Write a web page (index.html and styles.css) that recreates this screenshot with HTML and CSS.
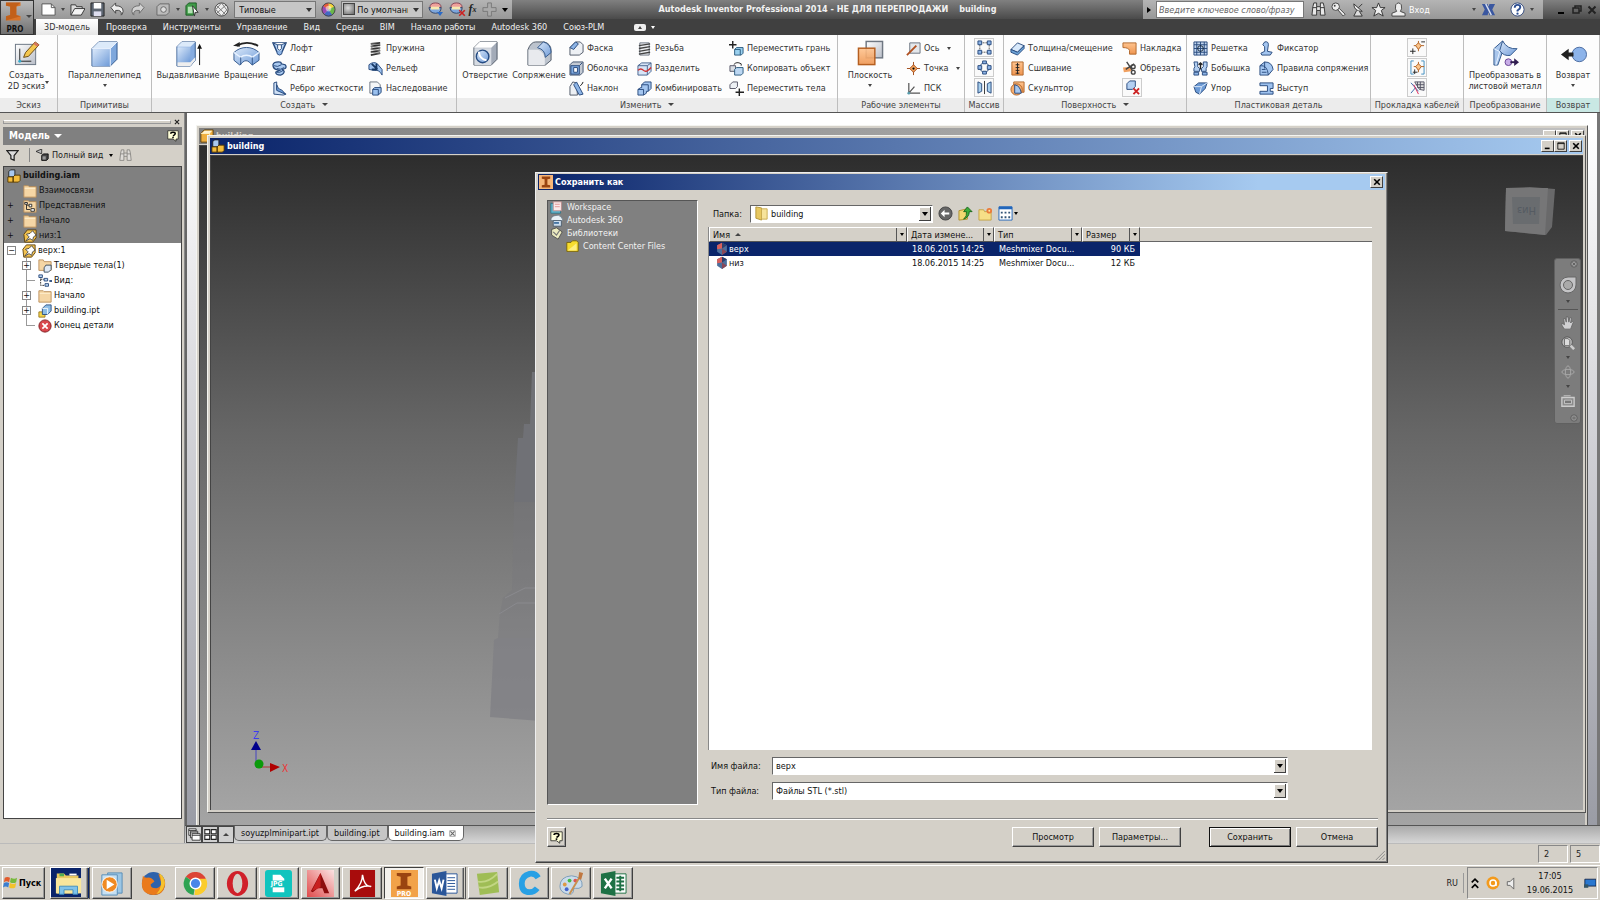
FILE: index.html
```html
<!DOCTYPE html>
<html lang="ru">
<head>
<meta charset="utf-8">
<title>Autodesk Inventor Professional 2014</title>
<link rel="stylesheet" href="styles.css">
</head>
<body>
<svg class="defs" aria-hidden="true">
<defs>
<linearGradient id="blue" x1="0" y1="0" x2="1" y2="1"><stop offset="0" stop-color="#dbe9fa"/><stop offset="1" stop-color="#6f9bd8"/></linearGradient>
<linearGradient id="grey" x1="0" y1="0" x2="1" y2="1"><stop offset="0" stop-color="#ffffff"/><stop offset="1" stop-color="#b9bec8"/></linearGradient>
<linearGradient id="org" x1="0" y1="0" x2="0" y2="1"><stop offset="0" stop-color="#ffc48f"/><stop offset="1" stop-color="#ee9550"/></linearGradient>
<symbol id="sketch" viewBox="0 0 28 28"><rect x="2.500" y="4.500" width="21" height="21" fill="url(#grey)" stroke="#6b7684"/><path d="M7 9v13h12" fill="none" stroke="#222"/><circle cx="7" cy="22" r="1.500" fill="#3ac"/><path d="M11 18l2-5L23 2l4 3-11 12z" fill="#f3c64f" stroke="#6a4a13"/><path d="M23 2l4 3-2 2-4-3z" fill="#d5755d"/></symbol>
<symbol id="box" viewBox="0 0 28 28"><path d="M1 9l7-7h19v18l-7 7H1z" fill="#7ea7dc" stroke="#33588c"/><path d="M1 9l7-7h19l-7 7z" fill="#dceafa"/><path d="M1.500 9.500h18V27h-18z" fill="url(#blue)"/><path d="M1 9h19l7-7M20 9v18" fill="none" stroke="#eef5ff"/></symbol>
<symbol id="extrude" viewBox="0 0 28 28"><path d="M2 7l5-5h14v19l-5 6H2z" fill="#86ace0" stroke="#33588c"/><path d="M2.500 7.500H16V23H2.500z" fill="url(#blue)"/><path d="M2 7l5-5h14l-5 5z" fill="#dceafa"/><path d="M2.500 23H16l5-5v3l-5 6H2.500z" fill="#eee"/><path d="M25.500 26V7" stroke="#111"/><path d="M23 9l2.500-5L28 9z" fill="#111"/></symbol>
<symbol id="revolve" viewBox="0 0 28 28"><path d="M1 13C8 6 20 6 27 13v8l-7 5-3-3c-2-2-5-2-7 0l-3 3-6-5z" fill="url(#blue)" stroke="#33588c"/><path d="M1 13l7 5c3-3 9-3 12 0l7-5" fill="none" stroke="#e8f2ff" stroke-width="1.500"/><path d="M8 18v8m12-8v8" stroke="#33588c"/><path d="M4 6Q14 0 26 6" fill="none" stroke="#222" stroke-width="2"/><path d="M0 6l7-4v5z" fill="#222"/></symbol>
<symbol id="hole" viewBox="0 0 28 28"><path d="M2 8l6-6h18v18l-6 6H2z" fill="#a3abb8" stroke="#4f5866"/><path d="M2 8l6-6h18l-6 6z" fill="#fff"/><path d="M2.500 8.500H20V26H2.500z" fill="#d6dbe2"/><circle cx="11" cy="17" r="6.500" fill="url(#blue)" stroke="#254b82" stroke-width="1.500"/><path d="M7 12q1 8 8 9" fill="none" stroke="#fff" stroke-width="2"/></symbol>
<symbol id="fillet" viewBox="0 0 28 28"><path d="M2 10Q5 2 10 2h9q7 2 7 9v10l-6 5H2z" fill="#bcc3cd" stroke="#4f5866"/><path d="M2.500 10h10q6 2 7 9v7h-17z" fill="#e8eaee"/><path d="M12 8L18 2q8 2 8 11l-6 5q0-8-8-10z" fill="url(#blue)" stroke="#33588c"/></symbol>
<symbol id="plane" viewBox="0 0 28 28"><rect x="9.500" y="1.500" width="17" height="17" fill="url(#grey)" stroke="#6f7782" stroke-width="1.500"/><rect x="1.500" y="8.500" width="17" height="17" fill="url(#org)" fill-opacity=".9" stroke="#b55f20" stroke-width="1.500"/></symbol>
<symbol id="sheet" viewBox="0 0 28 28"><path d="M2 9L11 1l2 5-7 20H2z" fill="#a9c6ec" stroke="#33588c"/><path d="M11 1q5 9 15 8l-7 7q-7 1-11-5z" fill="url(#blue)" stroke="#33588c"/><path d="M2 9l6 3-4 14" fill="none" stroke="#e8f2ff"/><circle cx="17" cy="23" r="3.500" fill="#c9aee8" stroke="#694594"/><path d="M19 23h5" stroke="#311d50" stroke-width="2"/><path d="M23 19l5 4-5 4z" fill="#311d50"/></symbol>
<symbol id="back" viewBox="0 0 28 28"><circle cx="20" cy="15" r="7.500" fill="#8db4ea" stroke="#4b6ba0"/><path d="M1 15l8-6v4h5v4H9v4z" fill="#222"/></symbol>
<symbol id="loft" viewBox="0 0 16 16"><path d="M1 2h14l-4 9q-3 3-6 0z" fill="#b4d0f2" stroke="#274a7d" stroke-width="1.500"/><path d="M1 2l5 2h4l5-2M6 4v4l2 2 2-2V4" fill="#fff" stroke="#274a7d"/><path d="M5 11q0 4 3 4t3-4" fill="#8db4e6" stroke="#274a7d"/></symbol>
<symbol id="sweep" viewBox="0 0 16 16"><path d="M1 4q1-3 6-3 3 0 3 2l4 1q2 2 0 4l-3 1 2 2q0 3-4 4-5 0-5-3l4-2-4-1q-3-1-3-5z" fill="#a9c9f0" stroke="#274a7d" stroke-width="1.300"/><path d="M2 5q4 2 8-1M5 8q4 2 8-1M5 12q3 1 7-2" fill="none" stroke="#274a7d"/></symbol>
<symbol id="rib" viewBox="0 0 16 16"><path d="M2 2l3-1v8l7 3 3 2-3 1-10-1z" fill="#cfe0f5" stroke="#274a7d"/><path d="M5 4q1 5 6 6l3 4-9-4z" fill="#6d9bd6" stroke="#274a7d"/></symbol>
<symbol id="spring" viewBox="0 0 16 16"><path d="M3 3l10-1M3 6l10-2M3 9l10-2M3 12l10-2M3 15l10-2" stroke="#333" stroke-width="2"/><path d="M3 3l10 1M3 6l10 1M3 9l10 1M3 12l10 1" stroke="#888"/></symbol>
<symbol id="emboss" viewBox="0 0 16 16"><path d="M1 4q5-4 9-1l5 6v6q-3-6-8-5L1 9z" fill="#9dc1ee" stroke="#274a7d"/><path d="M4 3l6 6M9 3v6H4" stroke="#173966" stroke-width="2" fill="none"/></symbol>
<symbol id="derive" viewBox="0 0 16 16"><path d="M2 1h8l3 3v9H2z" fill="#f4f6f8" stroke="#69727f"/><path d="M5 9l2-2h7v5l-3 3H5z" fill="#9ac0ee" stroke="#274a7d"/><path d="M5 9h6v6" fill="none" stroke="#274a7d"/></symbol>
<symbol id="cham" viewBox="0 0 16 16"><path d="M1 7l6-6h5l3 3v8l-4 3H1z" fill="#edf0f4" stroke="#4f5866"/><path d="M1 7l6-6 3 2-5 6z" fill="#8db4e6" stroke="#274a7d"/></symbol>
<symbol id="shell" viewBox="0 0 16 16"><path d="M1 4l3-3h11v11l-3 3H1z" fill="#c4cad3" stroke="#3f526e"/><path d="M2 5h9v9H2z" fill="#7fa9df" stroke="#274a7d"/><path d="M5 7h4v5H5z" fill="#fff" stroke="#274a7d"/><path d="M11 5l3-3" stroke="#274a7d"/></symbol>
<symbol id="draft" viewBox="0 0 16 16"><path d="M1 6l3-5 4 1 1 13H1z" fill="#edf0f4" stroke="#4f5866"/><path d="M5 4l3-3 7 13-4 1z" fill="#8db4e6" stroke="#274a7d"/><path d="M12 5q2-1 3-4" stroke="#111" fill="none"/></symbol>
<symbol id="thread" viewBox="0 0 16 16"><path d="M3 2h10v13H3z" fill="#eef0f3" stroke="#6a7280"/><path d="M2 5l12-2M2 8l12-2M2 11l12-2M2 14l12-2" stroke="#444" stroke-width="1.400"/></symbol>
<symbol id="split" viewBox="0 0 16 16"><path d="M1 5l4-3h10v9l-4 4H1z" fill="#d7e4f6" stroke="#46648f"/><path d="M1 5h10l4-3M11 5v10" stroke="#46648f" fill="none"/><path d="M1 10q3-3 6 0t8-3" stroke="#d03030" stroke-width="1.500" fill="none"/></symbol>
<symbol id="comb" viewBox="0 0 16 16"><path d="M5 4l3-3h7v7l-3 3h-2v2l-3 2H1V9l3-2h1z" fill="#a4c6f0" stroke="#274a7d"/><path d="M5 4h7v7M1 9h6v6" fill="none" stroke="#274a7d"/></symbol>
<symbol id="moveface" viewBox="0 0 16 16"><path d="M4 0v8M0 4h8" stroke="#222" stroke-width="1.500"/><path d="M6 9l2-2h7v6l-2 2H6z" fill="#9ad0ee" stroke="#2a5a7d"/><path d="M6 9h6v6" fill="none" stroke="#2a5a7d"/></symbol>
<symbol id="copyobj" viewBox="0 0 16 16"><path d="M1 5h6v6H1z" fill="#d9dde3" stroke="#556"/><path d="M6 9l2-2h7v6l-2 2H6z" fill="#bcd7f2" stroke="#2a5a7d"/><path d="M5 4q3-4 8-1v2" fill="none" stroke="#222"/></symbol>
<symbol id="movebody" viewBox="0 0 16 16"><path d="M1 4l3-3h5v5L7 8H1z" fill="#edf0f4" stroke="#556"/><path d="M11 8v8M7 12h9" stroke="#222" stroke-width="1.500"/></symbol>
<symbol id="axis" viewBox="0 0 16 16"><path d="M4 2h11v11H4z" fill="#e4e7eb" stroke="#69727f"/><path d="M1 15L11 5" stroke="#b05020" stroke-width="2"/></symbol>
<symbol id="point" viewBox="0 0 16 16"><path d="M8 1v14M1 8h14" stroke="#a04a18"/><path d="M8 4l4 4-4 4-4-4z" fill="#f6a55c" stroke="#a04a18"/><circle cx="8" cy="8" r="1.200"/></symbol>
<symbol id="ucs" viewBox="0 0 16 16"><path d="M3 2v11h12M3 13l6-7" stroke="#555" fill="none" stroke-width="1.300"/><circle cx="3" cy="13" r="1.500" fill="#59a"/></symbol>
<symbol id="rect4" viewBox="0 0 16 16"><path d="M3 3h10v10H3z" fill="none" stroke="#555" stroke-dasharray="2 1"/><path d="M1 1h4v4H1zM11 1h4v4h-4zM1 11h4v4H1zM11 11h4v4h-4z" fill="#8db4e6" stroke="#274a7d"/></symbol>
<symbol id="circ4" viewBox="0 0 16 16"><circle cx="8" cy="8" r="5" fill="none" stroke="#274a7d"/><path d="M6 1h4v3H6zM6 12h4v3H6zM1 6h4v4H1zM11 6h4v4h-4z" fill="#8db4e6" stroke="#274a7d"/></symbol>
<symbol id="mirror" viewBox="0 0 16 16"><path d="M8 1v14" stroke="#333"/><path d="M1 2l4 2v8l-4 2zM15 2l-4 2v8l4 2z" fill="#a9d0ee" stroke="#274a7d"/></symbol>
<symbol id="thick" viewBox="0 0 16 16"><path d="M1 9l7-7 7 3-7 7z" fill="#d8e9fb" stroke="#274a7d"/><path d="M1 9l7 3 7-7v3l-7 7-7-3z" fill="#6da4d8" stroke="#274a7d"/></symbol>
<symbol id="stitch" viewBox="0 0 16 16"><path d="M2 1h12v14H2z" fill="url(#org)" stroke="#b0662b"/><path d="M8 2v12M6 4h4M6 7h4M6 10h4M6 13h4" stroke="#222"/></symbol>
<symbol id="sculpt" viewBox="0 0 16 16"><path d="M4 1h11v11H4z" fill="url(#org)" stroke="#b0662b"/><circle cx="7" cy="9" r="6" fill="#f7ae70" stroke="#b0662b"/><path d="M5 4v9h7q-1-8-7-9z" fill="#a9c9f0" stroke="#274a7d"/></symbol>
<symbol id="patch" viewBox="0 0 16 16"><path d="M1 2h14v12H8v-4q-1-3-7-3z" fill="url(#org)" stroke="#b0662b"/></symbol>
<symbol id="trim" viewBox="0 0 16 16"><path d="M1 7l9-1v5L2 12z" fill="#f0a060"/><path d="M5 1l6 9M13 3L4 9" stroke="#444" stroke-width="1.500"/><circle cx="12" cy="12" r="2" fill="none" stroke="#444" stroke-width="1.500"/><circle cx="12" cy="6" r="2" fill="none" stroke="#444" stroke-width="1.500"/></symbol>
<symbol id="delface" viewBox="0 0 16 16"><path d="M2 4l3-3h6v6l-3 3H2z" fill="#b4d0f2" stroke="#274a7d"/><path d="M9 9l6 6m0-6l-6 6" stroke="#c22" stroke-width="2"/></symbol>
<symbol id="grill" viewBox="0 0 16 16"><path d="M1 1h14v14H1z" fill="#c0d4ee" stroke="#274a7d"/><path d="M4 1v14M8 1v14M12 1v14M1 4h14M1 8h14M1 12h14" stroke="#274a7d"/><circle cx="8" cy="8" r="3" fill="none" stroke="#123"/></symbol>
<symbol id="boss" viewBox="0 0 16 16"><path d="M1 1h4v5l2 2v3H1V8l1-2zM11 1h4v5l-1 2v3H9V8l2-2z" fill="#b4d0f2" stroke="#274a7d"/><path d="M8 9V2M6 4l2-2 2 2" stroke="#222" fill="none" stroke-width="1.500"/><path d="M1 12h5v3H1zM10 12h5v3h-5z" fill="#8db4e6" stroke="#274a7d"/></symbol>
<symbol id="rest" viewBox="0 0 16 16"><path d="M1 6l5-4h9l-2 6-6 6-4-2z" fill="#6d9bd6" stroke="#274a7d"/><path d="M1 6h8l6-4M9 6l-2 8" stroke="#dceafa" fill="none"/></symbol>
<symbol id="snap" viewBox="0 0 16 16"><path d="M6 1q4-1 4 3l-1 7 5 1-2 3H3l-1-2 4-2V6L4 4z" fill="#a4c6f0" stroke="#274a7d"/></symbol>
<symbol id="rule" viewBox="0 0 16 16"><path d="M1 5l5-4q8 0 9 8l-5 6H1z" fill="#a4c6f0" stroke="#274a7d"/><path d="M1 5q8-1 9 10M3 9h4M3 12h5M6 1v7" fill="none" stroke="#274a7d"/></symbol>
<symbol id="lip" viewBox="0 0 16 16"><path d="M1 2h14v6h-3v3h3v3H1v-3h8V5H1z" fill="#9dc1ee" stroke="#274a7d"/></symbol>
<symbol id="cable1" viewBox="0 0 16 16"><path d="M9 1v11M4 6h11" stroke="#b06020"/><path d="M9 3l3 3-3 4-3-4z" fill="#fbc48a" stroke="#b06020"/><path d="M3 9v6M0 12h6M12 2h4" stroke="#222"/></symbol>
<symbol id="cable2" viewBox="0 0 16 16"><path d="M4 1H1v14h3M12 1h3v14h-3" fill="none" stroke="#3b8cc0"/><path d="M9 2v11M4 7h11" stroke="#b06020"/><path d="M9 4l3 3-3 4-3-4z" fill="#fbc48a" stroke="#b06020"/><path d="M5 10v5M3 13h5" stroke="#222"/></symbol>
<symbol id="cable3" viewBox="0 0 16 16"><path d="M5 2h10v9l-5-1z" fill="#ddd" stroke="#556"/><path d="M8 2v6m3-6v8M6 5h9M8 8h7" stroke="#556"/><path d="M1 3l8 9M1 14l5-6" stroke="#36a"/><path d="M4 5l5 10" stroke="#d25"/></symbol>
<symbol id="new" viewBox="0 0 16 16"><path d="M1 2h10l4 4v8H1z" fill="#fff" stroke="#555"/><path d="M11 2v4h4" fill="none" stroke="#555"/></symbol>
<symbol id="open" viewBox="0 0 16 16"><path d="M1 14V3h5l1 2h6v2" fill="#ddd" stroke="#333"/><path d="M1 14l4-7h11l-4 7z" fill="#f4f4f4" stroke="#333"/></symbol>
<symbol id="save" viewBox="0 0 16 16"><path d="M1 1h14v14H1z" fill="#5d6672" stroke="#222"/><path d="M4 1h8v6H4z" fill="#fff"/><path d="M4 10h8v5H4z" fill="#dde"/></symbol>
<symbol id="undo" viewBox="0 0 16 16"><path d="M1 6l5-5v3q8 0 8 6-1 4-2 4 1-6-6-5v3z" fill="#eee" stroke="#444"/></symbol>
<symbol id="select" viewBox="0 0 16 16"><path d="M1 5l3-3h10v9l-3 3H1z" fill="#bbb" stroke="#666"/><circle cx="8" cy="8" r="3" fill="#ddd" stroke="#666"/></symbol>
<symbol id="green" viewBox="0 0 16 16"><path d="M1 4l3-3h8v9l-3 4H1z" fill="#3f9a48" stroke="#1d5c25"/><path d="M3 5h5v7H3z" fill="#b4e0b4"/><path d="M8 4l6 7-3 0-1 4z" fill="#fff" stroke="#333"/></symbol>
<symbol id="ball" viewBox="0 0 16 16"><circle cx="8" cy="8" r="7" fill="#eee" stroke="#444"/><path d="M3 4l9 9M8 1l6 8M2 8l6 7M13 3L3 12M8 1L2 8M14 8l-6 7" stroke="#777"/></symbol>
<symbol id="wheel" viewBox="0 0 16 16"><path d="M8 8V1a7 7 0 0 1 6 4z" fill="#f5d53a"/><path d="M8 8l6-3a7 7 0 0 1-2 9z" fill="#6ab74a"/><path d="M8 8l4 6a7 7 0 0 1-9-1z" fill="#4468c4"/><path d="M8 8l-5 5a7 7 0 0 1-1-9z" fill="#9a4ab4"/><path d="M8 8L2 4a7 7 0 0 1 6-3z" fill="#e65a3a"/><circle cx="8" cy="8" r="7" fill="none" stroke="#444"/><circle cx="8" cy="7" r="3" fill="#fff" opacity=".5"/></symbol>
<symbol id="bowl" viewBox="0 0 16 16"><path d="M2 6q0-5 6-5t6 5z" fill="#efa09a" stroke="#845"/><path d="M1 6h13q0 6-6 6T1 6z" fill="#7da6dc" stroke="#346"/><path d="M3 5h9v3H3z" fill="#f6e9b0"/></symbol>
<symbol id="plus" viewBox="0 0 16 16"><path d="M6 1h4v5h5v4h-5v5H6v-5H1V6h5z" fill="#aaa" stroke="#777"/></symbol>
<symbol id="binoc" viewBox="0 0 16 16"><path d="M2 5l1-4h3v4h4V1h3l1 4 1 9h-5V9H6v5H1z" fill="#e8e8e8" stroke="#333"/><path d="M6 5v4m4-4v4M2 6h4m4 0h4" stroke="#333"/></symbol>
<symbol id="key" viewBox="0 0 16 16"><circle cx="5" cy="5" r="4" fill="#eee" stroke="#444"/><path d="M7 8l6 7 2-2-6-6z" fill="#eee" stroke="#444"/><circle cx="4" cy="4" r="1" fill="#444"/></symbol>
<symbol id="dish" viewBox="0 0 16 16"><path d="M3 2q0 8 9 8z" fill="#eee" stroke="#333"/><path d="M8 6l4-4M6 9l-3 6h9l-3-5" fill="#ddd" stroke="#333"/></symbol>
<symbol id="star" viewBox="0 0 16 16"><path d="M8 1l2 5h5l-4 3 2 6-5-3-5 3 2-6-4-3h5z" fill="#eee" stroke="#333"/></symbol>
<symbol id="user" viewBox="0 0 16 16"><path d="M5 3q3-4 6 0 1 5-1 7l5 2v3H1v-3l5-2Q4 8 5 3z" fill="#eee" stroke="#444"/></symbol>
<symbol id="exch" viewBox="0 0 16 16"><path d="M1 2h6l1 3 1-3h6l-3 6 3 6H9l-1-3-1 3H1l3-6z" fill="#3a57a0"/><path d="M5 2l6 12" stroke="#d8e0f0" stroke-width="1.500"/></symbol>
<symbol id="help" viewBox="0 0 16 16"><circle cx="8" cy="8" r="7" fill="#fff" stroke="#334a7c"/><path d="M5 6q0-3 3-3t3 2.500Q11 7 8 9v1" fill="none" stroke="#2b4d91" stroke-width="2"/><circle cx="8" cy="12.500" r="1.200" fill="#2b4d91"/></symbol>
<symbol id="asm" viewBox="0 0 16 16"><path d="M2 3l2-2h5v6L7 9H2z" fill="#a9c9f0" stroke="#222"/><path d="M1 9h6v6H1zM7 9l2-2h6v6l-2 2H7z" fill="#f4bd3c" stroke="#4d3300"/></symbol>
<symbol id="cubey" viewBox="0 0 16 16"><path d="M1 5l4-4h10v10l-4 4H1z" fill="#f0b040" stroke="#5a3d09"/><path d="M2 5l3-3h9l-3 3z" fill="#fff3d0"/><path d="M1 5h10v10" fill="none" stroke="#fff3d0"/></symbol>
<symbol id="folder" viewBox="0 0 16 16"><path d="M1 2h5l1 1h8v12H1z" fill="#f5d6a5" stroke="#b98d58"/><path d="M2 5h12" stroke="#fff0d0"/></symbol>
<symbol id="views" viewBox="0 0 16 16"><path d="M1 2h5l1 1h8v12H1z" fill="#f5d6a5" stroke="#b98d58"/><path d="M4 6v6h4M4 7h4" stroke="#222" fill="none"/><path d="M7 6h3v3H7zM9 11h4v3H9zM2 4h3v2H2z" fill="#fff" stroke="#222"/></symbol>
<symbol id="part" viewBox="0 0 16 16"><path d="M1 6l4-5h10v9l-4 5H2z" fill="#f3c34f" stroke="#5a3d09"/><path d="M3 14l4-5-3-3 4-1 3-3 4 5-3 2-1 4-3-2z" fill="#fff" stroke="#444"/></symbol>
<symbol id="bodies" viewBox="0 0 16 16"><path d="M1 1h5l1 2h8v10H1z" fill="#f5d6a5" stroke="#b98d58"/><path d="M7 10l2-3h6v5l-3 3H7z" fill="#dfe9f5" stroke="#345"/></symbol>
<symbol id="tree" viewBox="0 0 16 16"><path d="M3 3v10h6M3 6h5" fill="none" stroke="#222" stroke-dasharray="2 1"/><path d="M1 1h4v3H1zM7 5h4v3H7zM8 11h4v3H8z" fill="#bcd7f2" stroke="#247"/><path d="M13 8h3" stroke="#247" stroke-width="2"/></symbol>
<symbol id="ipt" viewBox="0 0 16 16"><path d="M1 9h7v6H1z" fill="#f6d64c" stroke="#97761a"/><path d="M5 5l4-4h6v7l-4 4H5z" fill="#8dbde6" stroke="#274a7d"/><path d="M5 5h6v7" fill="none" stroke="#fff"/></symbol>
<symbol id="end" viewBox="0 0 16 16"><circle cx="8" cy="8" r="7" fill="#d9474c" stroke="#7d1d20"/><path d="M5 5l6 6m0-6l-6 6" stroke="#fff" stroke-width="2"/></symbol>
<symbol id="filter" viewBox="0 0 16 16"><path d="M1 2h14l-5 6v6l-4-2V8z" fill="#ddd" stroke="#222" stroke-width="1.500"/></symbol>
<symbol id="viewmode" viewBox="0 0 16 16"><path d="M0 3l7-3v6z" fill="#bbb" stroke="#222"/><path d="M7 8l2-2h6v6l-2 2H7z" fill="#444" stroke="#000"/><path d="M8 9h4v4H8z" fill="#999"/></symbol>
<symbol id="qmark" viewBox="0 0 16 16"><path d="M1 1h14v11h-3v3l-4-3H1z" fill="#ffffd8" stroke="#222"/><path d="M5 5q0-2 3-2t3 2q0 1-3 3" fill="none" stroke="#000" stroke-width="2"/><path d="M7 9h2v2H7z"/></symbol>
<symbol id="x" viewBox="0 0 10 10"><path d="M1.500 1.500l7 7m0-7l-7 7" stroke="currentColor" stroke-width="2"/></symbol>
<symbol id="closebox" viewBox="0 0 10 10"><path d="M1 1h8v8H1z" fill="none" stroke="#888"/><path d="M2 2l6 6m0-6l-6 6" stroke="#666" stroke-width="1.500"/></symbol>
<symbol id="max" viewBox="0 0 10 10"><path d="M1 1h8v8H1zM1 2h8" fill="none" stroke="#000"/></symbol>
<symbol id="min" viewBox="0 0 10 10"><path d="M1 8h6" stroke="#000" stroke-width="2"/></symbol>
<symbol id="restore" viewBox="0 0 10 10"><path d="M3 3V1h6v5H7M1 3h6v5H1z" fill="none" stroke="#222" stroke-width="1.500"/></symbol>
<symbol id="inv" viewBox="0 0 30 36"><path d="M2 2h21v5l-6 1v12l6 2v6H2v-6l6-2V8L2 7z" fill="#d8752a"/><path d="M2 2h21l-6 6v12l6 2-21 6v-6l6-2V8L2 7z" fill="#b4520f" opacity=".6"/></symbol>
<symbol id="ws" viewBox="0 0 16 16"><path d="M1 3h12v12H1z" fill="#5fb4cd" stroke="#2b7286"/><path d="M4 1h10v11H4z" fill="#fbe9e9" stroke="#b88"/><path d="M6 4h6M6 7h6" stroke="#d88"/></symbol>
<symbol id="cloud" viewBox="0 0 16 16"><path d="M1 8q0-5 5-6 5-2 8 2 3 3 0 5z" fill="#e8f1f6" stroke="#678"/><path d="M4 8h10v7H4z" fill="#cde" stroke="#456"/><path d="M5 11h6" stroke="#369" stroke-width="2"/></symbol>
<symbol id="lib" viewBox="0 0 16 16"><path d="M2 3l6-2 7 5-5 9-8-5z" fill="#ecebc0" stroke="#444"/><path d="M4 6l4 4 4-6" fill="none" stroke="#777" stroke-width="1.500"/></symbol>
<symbol id="yfold" viewBox="0 0 16 16"><path d="M1 3h5l2-2h5l2 2v11H1z" fill="#f8dc2e" stroke="#705a00"/><path d="M2 13L13 4v9z" fill="#ffef80"/></symbol>
<symbol id="wfold" viewBox="0 0 16 16"><path d="M2 1l6 1v13l-6-2z" fill="#e8c860" stroke="#b49536"/><path d="M8 3h6v11H8z" fill="#f7e49c" stroke="#c9ac50"/></symbol>
<symbol id="goback" viewBox="0 0 16 16"><circle cx="8" cy="8" r="7" fill="#666" stroke="#444"/><path d="M3 8l4-4v3h5v2H7v3z" fill="#fff"/></symbol>
<symbol id="up" viewBox="0 0 16 16"><path d="M1 5l9-2v11L1 15z" fill="#f2d870" stroke="#b09030"/><path d="M6 14q4-3 3-8H6l4-5 5 5h-3q0 6-6 8z" fill="#3cab3c" stroke="#1b6a1b"/></symbol>
<symbol id="newf" viewBox="0 0 16 16"><path d="M1 4h5l1 2h7v9H1z" fill="#f6df87" stroke="#c5a448"/><circle cx="12" cy="5" r="3" fill="#ea7a3a"/><circle cx="12" cy="5" r="1" fill="#ffe9a0"/></symbol>
<symbol id="grid" viewBox="0 0 16 16"><path d="M1 1h14v14H1z" fill="#fff" stroke="#26b"/><path d="M1 2h14" stroke="#26b" stroke-width="3"/><path d="M4 6v2m4-2v2m4-2v2M4 11v2m4-2v2m4-2v2" stroke="#357" stroke-width="2"/></symbol>
<symbol id="stl" viewBox="0 0 16 16"><path d="M8 1l6 3v8l-6 4-6-4V4z" fill="#4c6f9c"/><path d="M8 1L2 4v5l6-1z" fill="#d9605c"/><path d="M8 8l6 4-6 4z" fill="#8a4858"/><path d="M8 1l6 3-6 4z" fill="#2d3f6c"/></symbol>
<symbol id="wins" viewBox="0 0 16 16"><path d="M1 1h9v8H1zM1 3h9" fill="#fff" stroke="#222"/><path d="M3 4h9v8H3zM3 6h9" fill="#fff" stroke="#222"/><path d="M5 7h10v8H5zM5 9h10" fill="#fff" stroke="#222"/></symbol>
<symbol id="tiles" viewBox="0 0 16 16"><path d="M1 2h6v5H1zM9 2h6v5H9zM1 9h6v5H1zM9 9h6v5H9z" fill="#fff" stroke="#222" stroke-width="1.300"/></symbol>
<symbol id="flag" viewBox="0 0 16 16"><path d="M2 2q3-2 6 0L7 7Q4 5 1 7z" fill="#e25b2c"/><path d="M9 2q4 2 7 0l-1 5q-3 2-7 0z" fill="#77b93c"/><path d="M1 8q3-2 6 0l-1 5Q3 11 0 13z" fill="#3a7ed0"/><path d="M8 8q4 2 7 0l-1 5q-4 2-7 0z" fill="#f4c22c"/></symbol>
</defs>
</svg>

<header class="top">
  <button class="app" aria-label="Inventor"><svg class="app-logo"><use href="#inv"/></svg><b>PRO</b><i class="caret"></i></button>
  <div class="rows">
    <div class="titlebar">
      <div class="quick">
        <button class="q" aria-label="Создать"><svg><use href="#new"/></svg></button><i class="caret"></i>
        <button class="q" aria-label="Открыть"><svg><use href="#open"/></svg></button>
        <button class="q" aria-label="Сохранить"><svg><use href="#save"/></svg></button>
        <button class="q" aria-label="Отменить"><svg><use href="#undo"/></svg></button>
        <button class="q flip" aria-label="Повторить"><svg><use href="#undo"/></svg></button>
        <i></i>
        <button class="q" aria-label="Выбор"><svg><use href="#select"/></svg></button><i class="caret"></i>
        <button class="q" aria-label="Объекты"><svg><use href="#green"/></svg></button><i class="caret"></i>
        <button class="q" aria-label="Материал"><svg><use href="#ball"/></svg></button>
        <select class="combo" aria-label="Материал"><option>Типовые</option></select>
        <button class="q" aria-label="Цвет"><svg><use href="#wheel"/></svg></button>
        <span class="look"><i class="sphere"></i><select class="combo" aria-label="Вид материала"><option>По умолчанию</option></select></span>
        <button class="q" aria-label="Адаптер"><svg><use href="#bowl"/></svg><i class="caret blue"></i></button>
        <button class="q" aria-label="Очистить"><svg><use href="#bowl"/></svg><svg class="badge"><use href="#x"/></svg></button>
        <button class="q fx">f<sub>x</sub></button>
        <button class="q" aria-label="Добавить"><svg><use href="#plus"/></svg></button><i class="caret dark"></i>
      </div>
      <h1>Autodesk Inventor Professional 2014 - НЕ ДЛЯ ПЕРЕПРОДАЖИ <span>building</span></h1>
      <div class="info">
        <i class="tri"></i>
        <input class="search" type="text" aria-label="Поиск" placeholder="Введите ключевое слово/фразу">
        <button class="q" aria-label="Найти"><svg><use href="#binoc"/></svg></button>
        <button class="q" aria-label="Подписка"><svg><use href="#key"/></svg></button>
        <button class="q" aria-label="Связь"><svg><use href="#dish"/></svg></button>
        <button class="q" aria-label="Избранное"><svg><use href="#star"/></svg></button>
        <button class="q login"><svg><use href="#user"/></svg>Вход</button><i class="caret"></i>
        <button class="q" aria-label="Exchange"><svg><use href="#exch"/></svg></button>
        <button class="q help" aria-label="Справка"><svg><use href="#help"/></svg></button><i class="caret"></i>
      </div>
      <div class="winbtns"><button aria-label="Свернуть"><svg><use href="#min"/></svg></button><button aria-label="Восстановить"><svg><use href="#restore"/></svg></button><button aria-label="Закрыть"><svg><use href="#x"/></svg></button></div>
    </div>
    <nav class="tabs">
      <a href="#" class="on">3D-модель</a><a href="#">Проверка</a><a href="#">Инструменты</a><a href="#">Управление</a><a href="#">Вид</a><a href="#">Среды</a><a href="#">BIM</a><a href="#">Начало работы</a><a href="#">Autodesk 360</a><a href="#">Союз-PLM</a>
      <button class="mini" aria-label="Свернуть ленту"><i class="caret upw"></i></button><i class="caret lite"></i>
    </nav>
  </div>
</header>

<section class="ribbon">
  <div class="panel"><div class="tools center">
    <button class="big"><svg><use href="#sketch"/></svg>Создать<br>2D эскиз</button><i class="caret"></i></div><h2>Эскиз</h2></div>
  <div class="panel"><div class="tools center">
    <button class="big"><svg><use href="#box"/></svg>Параллелепипед<i class="caret"></i></button></div><h2>Примитивы</h2></div>
  <div class="panel"><div class="tools">
    <button class="big w64"><svg><use href="#extrude"/></svg>Выдавливание</button>
    <button class="big w48"><svg><use href="#revolve"/></svg>Вращение</button>
    <div class="col w96"><button><svg><use href="#loft"/></svg>Лофт</button><button><svg><use href="#sweep"/></svg>Сдвиг</button><button><svg><use href="#rib"/></svg>Ребро жесткости</button></div>
    <div class="col"><button><svg><use href="#spring"/></svg>Пружина</button><button><svg><use href="#emboss"/></svg>Рельеф</button><button><svg><use href="#derive"/></svg>Наследование</button></div></div><h2>Создать <i class="caret"></i></h2></div>
  <div class="panel"><div class="tools">
    <button class="big w48"><svg><use href="#hole"/></svg>Отверстие</button>
    <button class="big w56"><svg><use href="#fillet"/></svg>Сопряжение</button>
    <div class="col w66"><button><svg><use href="#cham"/></svg>Фаска</button><button><svg><use href="#shell"/></svg>Оболочка</button><button><svg><use href="#draft"/></svg>Наклон</button></div>
    <div class="col w90"><button><svg><use href="#thread"/></svg>Резьба</button><button><svg><use href="#split"/></svg>Разделить</button><button><svg><use href="#comb"/></svg>Комбинировать</button></div>
    <div class="col"><button><svg><use href="#moveface"/></svg>Переместить грань</button><button><svg><use href="#copyobj"/></svg>Копировать объект</button><button><svg><use href="#movebody"/></svg>Переместить тела</button></div></div><h2>Изменить <i class="caret"></i></h2></div>
  <div class="panel"><div class="tools">
    <button class="big w56"><svg><use href="#plane"/></svg>Плоскость<i class="caret"></i></button>
    <div class="col axes"><button><svg><use href="#axis"/></svg>Ось <i class="caret"></i></button><button><svg><use href="#point"/></svg>Точка <i class="caret"></i></button><button><svg><use href="#ucs"/></svg>ПСК</button></div></div><h2>Рабочие элементы</h2></div>
  <div class="panel"><div class="tools center"><div class="col boxed"><button aria-label="Прямоугольный"><svg><use href="#rect4"/></svg></button><button aria-label="Круговой"><svg><use href="#circ4"/></svg></button><button aria-label="Зеркало"><svg><use href="#mirror"/></svg></button></div></div><h2>Массив</h2></div>
  <div class="panel"><div class="tools wide">
    <div class="col w110"><button><svg><use href="#thick"/></svg>Толщина/смещение</button><button><svg><use href="#stitch"/></svg>Сшивание</button><button><svg><use href="#sculpt"/></svg>Скульптор</button></div>
    <div class="col"><button><svg><use href="#patch"/></svg>Накладка</button><button><svg><use href="#trim"/></svg>Обрезать</button><span class="boxed"><button aria-label="Удалить грань"><svg><use href="#delface"/></svg></button></span></div></div><h2>Поверхность <i class="caret"></i></h2></div>
  <div class="panel"><div class="tools wide">
    <div class="col w64"><button><svg><use href="#grill"/></svg>Решетка</button><button><svg><use href="#boss"/></svg>Бобышка</button><button><svg><use href="#rest"/></svg>Упор</button></div>
    <div class="col"><button><svg><use href="#snap"/></svg>Фиксатор</button><button><svg><use href="#rule"/></svg>Правила сопряжения</button><button><svg><use href="#lip"/></svg>Выступ</button></div></div><h2>Пластиковая деталь</h2></div>
  <div class="panel"><div class="tools center"><div class="col boxed"><button aria-label="Точка кабеля"><svg><use href="#cable1"/></svg></button><button aria-label="Группа"><svg><use href="#cable2"/></svg></button><button aria-label="Жгут"><svg><use href="#cable3"/></svg></button></div></div><h2>Прокладка кабелей</h2></div>
  <div class="panel"><div class="tools center"><button class="big"><svg><use href="#sheet"/></svg>Преобразовать в<br>листовой металл</button></div><h2>Преобразование</h2></div>
  <div class="panel ret"><div class="tools center"><button class="big"><svg><use href="#back"/></svg>Возврат<i class="caret"></i></button></div><h2>Возврат</h2></div>
</section>

<main class="main">
  <aside class="browser">
    <div class="grip"><i></i><button aria-label="Закрыть панель"><svg><use href="#x"/></svg></button></div>
    <div class="bhead"><b>Модель</b><i class="caret lite"></i><button aria-label="Справка"><svg><use href="#qmark"/></svg></button></div>
    <div class="btools"><svg><use href="#filter"/></svg><i class="vsep"></i><svg><use href="#viewmode"/></svg><span>Полный вид</span><i class="caret dark"></i><svg class="dim"><use href="#binoc"/></svg></div>
    <div class="treebox">
      <ul class="shade">
        <li class="root"><svg><use href="#asm"/></svg><b>building.iam</b></li>
        <li><i class="pm"></i><svg><use href="#folder"/></svg>Взаимосвязи</li>
        <li><i class="pm">+</i><svg><use href="#views"/></svg>Представления</li>
        <li><i class="pm">+</i><svg><use href="#folder"/></svg>Начало</li>
        <li><i class="pm">+</i><svg><use href="#part"/></svg>низ:1</li>
      </ul>
      <ul class="open">
        <li><i class="sq">−</i><svg><use href="#part"/></svg>верх:1</li>
      </ul>
      <ul class="kids">
        <li><i class="sq">+</i><svg><use href="#bodies"/></svg>Твердые тела(1)</li>
        <li><i class="br"></i><svg><use href="#tree"/></svg>Вид:</li>
        <li><i class="sq">+</i><svg><use href="#folder"/></svg>Начало</li>
        <li><i class="sq">+</i><svg><use href="#ipt"/></svg>building.ipt</li>
        <li><i class="br"></i><svg><use href="#end"/></svg>Конец детали</li>
      </ul>
    </div>
  </aside>
  <section class="area">
    <div class="mdi">
      <article class="win back"><div class="wtitle"><svg><use href="#cubey"/></svg><b>building</b><span class="wb"><button aria-label="Свернуть"><svg><use href="#min"/></svg></button><button aria-label="Развернуть"><svg><use href="#max"/></svg></button><button class="cl" aria-label="Закрыть"><svg><use href="#x"/></svg></button></span></div><div class="client"></div></article>
      <article class="win front"><div class="wtitle"><svg><use href="#asm"/></svg><b>building</b><span class="wb"><button aria-label="Свернуть"><svg><use href="#min"/></svg></button><button aria-label="Развернуть"><svg><use href="#max"/></svg></button><button class="cl" aria-label="Закрыть"><svg><use href="#x"/></svg></button></span></div>
        <div class="client">
          <svg class="model" viewBox="0 0 80 360"><path d="M45 0l-2 52h-6l-1 14h-5l-4 64h53V0z" fill="#707176"/><path d="M27 130l-2 88-9 8-3 15-2 25h69V130z" fill="#77777c" opacity=".4"/><path d="M11 266l-4 2-4 77 77 6v-85z" fill="#808085" opacity=".8"/><path d="M18 226l20-10h22M12 242l18-11h30" fill="none" stroke="#8a8a8e"/></svg>
          <svg class="triad" viewBox="0 0 42 46"><path d="M7 37V18" stroke="#4444c0"/><path d="M2 20l5-9 5 9z" fill="#00008b"/><path d="M7 37h18" stroke="#a33"/><path d="M21 33l10 4-10 5z" fill="#b00000"/><circle cx="10" cy="34" r="4.500" fill="#0a9a0a"/><text x="4" y="9" fill="#3c3cf0">Z</text><text x="33" y="42" fill="#e33">X</text></svg>
          <svg class="cube" viewBox="0 0 52 50"><path d="M2 2l24-1 25 2-3 38-6 8-41-4z" fill="#69696a"/><path d="M2 2h42l-3 47-40-4z" fill="#767677"/><path d="M8 11h28l-1 27H9z" fill="#696c6f"/><text x="-32" y="-21" transform="rotate(180)">Низ</text></svg>
          <div class="nav">
            <svg class="tiny" viewBox="0 0 10 10"><circle cx="5" cy="5" r="4" fill="#999" stroke="#555"/><path d="M3 3l4 4m0-4l-4 4" stroke="#555"/></svg>
            <svg class="wheel" viewBox="0 0 18 18"><path d="M9 1h8v8a8 8 0 1 1-8-8z" fill="#c4c4c6" stroke="#666"/><circle cx="9" cy="9" r="4.500" fill="#aaa" stroke="#666"/></svg>
            <i class="caret"></i><hr>
            <svg viewBox="0 0 16 16"><path d="M4 15q-4-5-3-7l3 2-1-7 2 0 1 4 0-6h2l1 6 1-5 2 0-1 6 2-2 1 1-3 8z" fill="#d0d0d2" stroke="#666"/></svg>
            <svg viewBox="0 0 16 16"><circle cx="7" cy="7" r="6" fill="#bbb" stroke="#555"/><path d="M4 3h4l2 2v6H4z" fill="#ddd" stroke="#666"/><path d="M11 11l4 4" stroke="#ccc" stroke-width="3"/></svg>
            <i class="caret"></i>
            <svg viewBox="0 0 16 16"><ellipse cx="8" cy="8" rx="7" ry="3" fill="none" stroke="#aaa"/><ellipse cx="8" cy="8" rx="3" ry="7" fill="none" stroke="#aaa"/></svg>
            <i class="caret"></i>
            <svg viewBox="0 0 16 16"><path d="M1 4h14v10H1z" fill="#8a8a8a" stroke="#ccc" stroke-width="1.500"/><path d="M4 7h8v4H4z" fill="#777" stroke="#ccc"/><path d="M3 2h8" stroke="#ccc"/></svg>
            <svg class="tiny" viewBox="0 0 10 10"><circle cx="5" cy="5" r="4" fill="#999" stroke="#555"/><path d="M3 4h4M3 6h4" stroke="#555"/></svg>
          </div>
        </div></article>
    </div>
    <nav class="docs">
      <button aria-label="Каскад"><svg><use href="#wins"/></svg></button><button aria-label="Плитка"><svg><use href="#tiles"/></svg></button><button aria-label="Список"><i class="caret upw"></i></button>
      <a href="#">soyuzplminipart.ipt</a><a href="#">building.ipt</a><a href="#" class="on">building.iam <svg><use href="#closebox"/></svg></a>
    </nav>
  </section>
</main>

<footer class="status"><span>2</span><span>5</span></footer>

<footer class="taskbar">
  <button class="start"><svg><use href="#flag"/></svg>Пуск</button>
  <div class="apps">
    <button class="night stack" aria-label="Проводник"><svg viewBox="0 0 30 28"><path d="M2 3h8l2 2h14v20H2z" fill="#e8c860"/><path d="M1 8h28v17H1z" fill="#f8e69c"/><path d="M5 17h20v9h-5v-5H10v5H5z" fill="#7fc3ea" stroke="#3b8bc0"/><path d="M5 3h5v3H5z" fill="#4fae50"/><path d="M16 3h8v2h-8z" fill="#fff"/></svg></button>
    <button aria-label="Плеер"><svg viewBox="0 0 28 28"><path d="M10 3h15v21H10z" fill="#9cc6e4" stroke="#5a8fb8"/><path d="M4 5h16v21H4z" fill="#c6e0f2" stroke="#5a8fb8"/><circle cx="12" cy="15" r="8" fill="#f08a22" stroke="#fff"/><path d="M9 10l8 5-8 5z" fill="#fff"/></svg></button>
    <button class="flat" aria-label="Firefox"><svg viewBox="0 0 28 28"><circle cx="14" cy="14" r="12" fill="#2e62ac"/><path d="M3 6q1 2 4 2 5-1 8 4l-4 3q0 4 6 4 5-1 5-6l-3-9q8 4 7 12-2 10-12 10Q1 25 2 13z" fill="#ea7a1c"/><path d="M20 3q8 6 5 14-2 6-8 8 8-8 3-22z" fill="#f6c22e"/></svg></button>
    <button aria-label="Chrome"><svg viewBox="0 0 28 28"><path d="M14 14L4 7a12 12 0 0 1 21 3z" fill="#dc4436"/><path d="M14 14h12a12 12 0 0 1-13 12z" fill="#fbcc2c"/><path d="M14 14l-2 12A12 12 0 0 1 4 7z" fill="#2fa352"/><path d="M14 9h11a12 12 0 0 1-11 17l5-10z" fill="#fbcc2c"/><circle cx="14" cy="14" r="5.500" fill="#4a86e8" stroke="#fff" stroke-width="1.500"/></svg></button>
    <button aria-label="Opera"><svg viewBox="0 0 28 28"><ellipse cx="14" cy="14" rx="11" ry="13" fill="#d0202a"/><ellipse cx="14" cy="14" rx="5" ry="10" fill="#d4d0c8"/></svg></button>
    <button aria-label="JPG"><svg viewBox="0 0 28 28"><rect width="28" height="28" rx="3" fill="#10c4be"/><path d="M8 5h8l4 4v14H8z" fill="#fff"/><path d="M5 11h18v7H5z" fill="#10c4be"/><text x="6" y="17" class="jpg">JPG</text></svg></button>
    <button aria-label="AutoCAD"><svg viewBox="0 0 28 28"><rect width="28" height="28" fill="url(#acad)"/><defs><linearGradient id="acad" x1="1" y1="0" x2="0" y2="1"><stop offset="0" stop-color="#fbe3e3"/><stop offset="1" stop-color="#e04a4a"/></linearGradient></defs><path d="M14 3l9 21h-5l-2-5h-5l-5 4-2-1z" fill="#8c0c0c"/><path d="M14 3L5 22l9-4z" fill="#c82020"/></svg></button>
    <button aria-label="Acrobat"><svg viewBox="0 0 28 28"><rect x="1" width="26" height="28" fill="#a80c0c"/><path d="M6 22q8-8 8-17 2 13 9 12-8-2-17 5z" fill="none" stroke="#fff" stroke-width="1.500"/></svg></button>
    <button class="down" aria-label="Inventor"><svg viewBox="0 0 28 28"><rect width="28" height="28" fill="#f2a248"/><path d="M6 3h15v3l-4 1v9l4 1v3H6v-3l4-1V7L6 6z" fill="#9a4410"/><text x="6" y="27" class="pro">PRO</text></svg></button>
    <button class="stack" aria-label="Word"><svg viewBox="0 0 28 28"><path d="M14 4h13v20H14z" fill="#fff" stroke="#2a5699"/><path d="M17 8h8M17 11h8M17 14h8M17 17h8M17 20h8" stroke="#2a5699"/><path d="M1 4l15-3v26L1 24z" fill="#2a5699"/><path d="M4 10l2 9 2.500-8L11 19l2-9" stroke="#fff" stroke-width="2" fill="none"/></svg></button>
    <button aria-label="Camtasia"><svg viewBox="0 0 28 28"><path d="M3 4l21-2 2 21-20 3z" fill="#9fbd55"/><path d="M4 12q10 2 20-8M5 18q10 2 20-6" stroke="#c2d684" stroke-width="2" fill="none"/></svg></button>
    <button aria-label="Cura"><svg viewBox="0 0 28 28"><path d="M23 8q-3-5-9-4-8 2-8 10 0 9 8 9 5 0 8-4" fill="none" stroke="#28a0e4" stroke-width="6"/></svg></button>
    <button aria-label="Paint"><svg viewBox="0 0 28 28"><path d="M2 17Q2 7 14 6q12 1 11 11-3 3-7 2-3 0-2 3-1 4-6 3-8-2-8-8z" fill="#cbdcea" stroke="#7b9bb8"/><circle cx="7" cy="15" r="2" fill="#d94"/><circle cx="12" cy="11" r="2" fill="#4b4"/><circle cx="18" cy="11" r="2" fill="#d55"/><circle cx="9" cy="20" r="2" fill="#46c"/><path d="M12 25L22 8" stroke="#c89050" stroke-width="2"/><path d="M21 9l1-7 4 1-2 7z" fill="#c07840"/></svg></button>
    <button aria-label="Excel"><svg viewBox="0 0 28 28"><path d="M14 4h13v20H14z" fill="#fff" stroke="#1e7145"/><path d="M17 8h8M17 12h8M17 16h8M17 20h8M21 6v16" stroke="#1e7145" stroke-width="2"/><path d="M1 4l15-3v26L1 24z" fill="#1e7145"/><path d="M5 9l7 10M12 9L5 19" stroke="#fff" stroke-width="2.500"/></svg></button>
  </div>
  <span class="lang">RU</span>
  <div class="tray">
    <svg viewBox="0 0 10 12"><path d="M2 5l3-3 3 3M2 10l3-3 3 3" fill="none" stroke="#000" stroke-width="1.500"/></svg>
    <svg class="round" viewBox="0 0 14 14"><circle cx="7" cy="7" r="6.500" fill="#f39a1c"/><circle cx="7" cy="7" r="3" fill="none" stroke="#fff" stroke-width="1.500"/><path d="M10 6v4" stroke="#fff" stroke-width="1.500"/></svg>
    <svg viewBox="0 0 10 14"><path d="M1 5h3l4-4v12L4 9H1z" fill="#eee" stroke="#666"/></svg>
    <time>17:05<br>19.06.2015</time>
    <svg viewBox="0 0 14 12"><path d="M1 1h13v8H1z" fill="#2a78d0" stroke="#124"/><path d="M0 7h5v4H0z" fill="#356"/></svg>
  </div>
</footer>

<section class="dialog" role="dialog" aria-label="Сохранить как">
  <div class="dtitle"><svg viewBox="0 0 30 30"><rect width="30" height="30" fill="#f6b679"/><path d="M6 3h18v5l-6 1v12l6 1v5H6v-5l6-1V9L6 8z" fill="#9a4410"/></svg><b>Сохранить как</b><button aria-label="Закрыть"><svg><use href="#x"/></svg></button></div>
  <div class="dbody">
    <ul class="places">
      <li><svg><use href="#ws"/></svg>Workspace</li><li><svg><use href="#cloud"/></svg>Autodesk 360</li><li><svg><use href="#lib"/></svg>Библиотеки</li><li class="sub"><svg><use href="#yfold"/></svg>Content Center Files</li>
    </ul>
    <div class="right">
      <div class="look-in"><label for="dir">Папка:</label><span class="field dir"><svg><use href="#wfold"/></svg><select id="dir"><option>building</option></select></span>
        <button aria-label="Назад"><svg><use href="#goback"/></svg></button><button aria-label="Вверх"><svg><use href="#up"/></svg></button><button aria-label="Новая папка"><svg><use href="#newf"/></svg></button><button aria-label="Вид"><svg><use href="#grid"/></svg></button><i class="caret dark"></i></div>
      <div class="files">
        <table>
          <colgroup><col class="c1"><col class="c2"><col class="c3"><col class="c4"></colgroup>
          <thead><tr><th><div>Имя <i class="caret upw"></i><button aria-label="Фильтр имени"><i class="caret dark"></i></button></div></th><th><div>Дата измене...<button aria-label="Фильтр даты"><i class="caret dark"></i></button></div></th><th><div>Тип<button aria-label="Фильтр типа"><i class="caret dark"></i></button></div></th><th><div>Размер<button aria-label="Фильтр размера"><i class="caret dark"></i></button></div></th></tr></thead>
          <tbody><tr class="sel"><td><svg><use href="#stl"/></svg>верх</td><td>18.06.2015 14:25</td><td>Meshmixer Docu...</td><td>90 КБ</td></tr>
          <tr><td><svg><use href="#stl"/></svg>низ</td><td>18.06.2015 14:25</td><td>Meshmixer Docu...</td><td>12 КБ</td></tr></tbody>
        </table>
      </div>
      <div class="frow"><label for="fn">Имя файла:</label><span class="field"><input id="fn" type="text" value="верх"><button class="drop" aria-label="Список имен"></button></span></div>
      <div class="frow"><label for="ft">Тип файла:</label><span class="field"><select id="ft"><option>Файлы STL (*.stl)</option></select></span></div>
    </div>
  </div>
  <div class="dfoot"><button class="hb" aria-label="Справка"><svg><use href="#qmark"/></svg></button><button class="btn">Просмотр</button><button class="btn">Параметры...</button><button class="btn def">Сохранить</button><button class="btn">Отмена</button></div>
  <svg class="size" viewBox="0 0 12 12"><path d="M1 12L12 1M5 12l7-7M9 12l3-3" stroke="#808080"/></svg>
</section>
</body>
</html>
```
FILE: styles.css
```css
* { box-sizing: border-box; }
html, body { height: 100%; }
body { margin: 0; display: flex; flex-direction: column; position: relative; overflow: hidden; background: #d4d0c8; color: #222; font: 9px/12px "DejaVu Sans Condensed", "DejaVu Sans", sans-serif; }
button, input, select { font: inherit; color: inherit; margin: 0; padding: 0; border: 0; background: none; border-radius: 0; }
ul { margin: 0; padding: 0; list-style: none; }
h1, h2 { margin: 0; font-size: inherit; font-weight: normal; }
a { color: inherit; text-decoration: none; }
svg { width: 15px; height: 15px; flex: none; display: block; }
.defs { position: absolute; width: 0; height: 0; }
.caret { display: inline-block; flex: none; width: 0; height: 0; border: 3px solid transparent; border-bottom: 0; border-top-color: #444; }
.caret.dark { border-top-color: #000; }
.caret.lite { border-top-color: #fff; }
.caret.blue { border-top-color: #2a6ac8; }
.caret.upw { border-top: 0; border-bottom: 3px solid #444; }

/* title and tabs */
.top { display: flex; height: 35px; flex: none; background: #404040; }
.app { position: relative; width: 34px; display: flex; flex-direction: column; align-items: center; background: linear-gradient(#bcbcbc, #707070); border: 1px solid #333; padding-right: 4px; }
.app-logo { width: 22px; height: 25px; }
.app b { font-size: 8px; line-height: 8px; color: #111; }
.app .caret { position: absolute; right: 1px; top: 14px; border-width: 3px 3px 0; }
.rows { flex: 1; min-width: 0; }
.titlebar { height: 19px; display: flex; background: linear-gradient(#808080, #555 80%, #4a4a4a); }
.quick, .info { display: flex; align-items: center; background: linear-gradient(#b4b4b4, #989898); }
.quick { width: 478px; padding: 0 4px 0 7px; justify-content: space-between; }
.q { position: relative; display: flex; align-items: center; }
.quick .caret { border-width: 3px 2px 0; }
.quick .dark { border-width: 4px 3px 0; }
.quick .blue { position: absolute; right: 0; bottom: 1px; border-width: 4px 3px 0; }
.flip { transform: scaleX(-1); opacity: .6; }
.badge { position: absolute; right: -2px; bottom: 0; width: 8px; height: 8px; color: #c22; }
.fx { font: italic bold 12px "Liberation Serif", serif; }
.fx sub { font-size: 8px; }
.combo { appearance: none; width: 82px; height: 17px; padding: 0 14px 0 4px; border: 1px solid #777; background: #c6c6c6 url("data:image/svg+xml,%3Csvg xmlns='http://www.w3.org/2000/svg' width='6' height='4'%3E%3Cpath d='M0 0h6L3 4z' fill='%23333'/%3E%3C/svg%3E") no-repeat right 3px center; color: #111; text-overflow: clip; }
.look { position: relative; display: flex; }
.look .combo { padding-left: 15px; }
.sphere { position: absolute; left: 2px; top: 2px; width: 12px; height: 12px; border: 1px solid #444; background: radial-gradient(circle at 40% 40%, #ddd, #666); }
.titlebar h1 { flex: 1; font-size: 9px; line-height: 19px; font-weight: bold; color: #f2f2f2; text-align: center; white-space: nowrap; overflow: hidden; }
.titlebar h1 span { margin-left: 8px; }
.info { width: 400px; gap: 5px; padding: 0 4px; }
.tri { border: 3px solid transparent; border-left: 4px solid #000; border-right: 0; }
.search { width: 148px; height: 17px; background: #fff; border: 1px solid #777; padding: 0 2px; font-style: italic; margin-right: 2px; }
.search::placeholder { color: #666; opacity: 1; }
.login { width: 76px; gap: 3px; color: #fff; }
.help { margin-left: 9px; }
.info .caret { border-width: 3px 2px 0; }
.winbtns { width: 57px; display: flex; align-items: center; justify-content: flex-end; gap: 5px; padding-right: 3px; }
.winbtns svg { width: 10px; height: 10px; color: #222; }
.tabs { display: flex; align-items: stretch; height: 16px; padding-left: 2px; color: #f0f0f0; line-height: 17px; }
.tabs a { padding: 0 8px; white-space: nowrap; }
.tabs .on { background: linear-gradient(#fff, #e6e6e6); color: #333; }
.mini { align-self: center; display: grid; place-items: center; width: 12px; height: 7px; margin: 0 5px 0 22px; background: #eee; border-radius: 2px; }
.tabs .caret { align-self: center; border-width: 3px 2px 0; }
.mini .upw { border-width: 0 2px 3px; }

/* ribbon */
.ribbon { flex: none; height: 78px; display: grid; grid-template-columns: 58fr 94fr 305fr 381fr 127fr 39fr 183fr 184fr 93fr 83fr 53fr; background: #fdfdfd; border-bottom: 1px solid #555; }
.panel { min-width: 0; display: flex; flex-direction: column; border-right: 1px solid #bdbdbd; }
.panel h2 { height: 14px; line-height: 15px; text-align: center; background: #ececec; color: #444; white-space: nowrap; }
.panel h2 .caret { margin: 0 0 2px 4px; }
.ret h2 { background: #c9e8e4; }
.tools { flex: 1; display: flex; padding: 3px 0 0 4px; gap: 2px; color: #333; }
.wide { padding-left: 6px; }
.center { justify-content: center; padding-left: 0; gap: 0; }
.center > .caret { align-self: flex-end; margin-bottom: 14px; border-width: 3px 2px 0; }
.big { display: block; align-self: flex-start; line-height: 11px; white-space: nowrap; text-align: center; }
.big svg { width: 27px; height: 27px; margin: 2px auto 3px; }
.big .caret { display: block; margin: 3px auto 0; border-width: 3px 2px 0; width: 4px; }
.col { display: flex; flex-direction: column; }
.col button { display: flex; align-items: center; gap: 3px; height: 20px; white-space: nowrap; }
.col .caret { margin-left: 4px; border-width: 3px 2px 0; }
.w48 { width: 48px; } .w56 { width: 56px; } .w64 { width: 64px; } .w66 { width: 66px; } .w90 { width: 90px; } .w96 { width: 94px; } .w110 { width: 110px; }
.axes { margin-left: 6px; }
.boxed button { width: 20px; height: 19px; margin-bottom: 1px; border: 1px solid #ccc; justify-content: center; background: #fafafa; }

/* model browser */
.main { flex: 1; min-height: 0; display: flex; }
.browser { width: 185px; flex: none; display: flex; flex-direction: column; padding: 4px 2px 24px 3px; border-right: 1px solid #888; }
.grip { display: flex; align-items: center; justify-content: space-between; height: 9px; padding-right: 2px; margin-bottom: 1px; }
.grip i { width: 168px; height: 4px; border: 1px solid #999; border-top-color: #fff; }
.grip svg { width: 6px; height: 6px; }
.bhead { display: flex; align-items: center; gap: 4px; height: 18px; padding: 0 3px 0 6px; background: #808080; color: #fff; margin-bottom: 2px; }
.bhead b { font-size: 10px; }
.bhead button { margin-left: auto; }
.bhead .caret { border-width: 4px 4px 0; }
.bhead svg { width: 12px; height: 12px; }
.btools { display: flex; align-items: center; height: 16px; gap: 3px; padding-left: 3px; margin-bottom: 3px; }
.btools svg { width: 13px; height: 13px; }
.vsep { width: 1px; height: 14px; margin: 0 3px 0 7px; background: #888; }
.btools .caret { margin: 0 3px 0 3px; border-width: 3px 2px 0; }
.dim { opacity: .5; }
.treebox { flex: 1; border: 1px solid #444; background: #fff; overflow: hidden; }
.treebox li { display: flex; align-items: center; height: 15px; gap: 2px; white-space: nowrap; color: #111; line-height: 15px; }
.treebox svg { width: 14px; height: 14px; }
.shade { background: #808080; padding-top: 1px; }
.treebox .root { padding-left: 3px; }
.pm { width: 17px; padding-left: 3px; font-style: normal; }
.sq { width: 9px; height: 9px; margin: 0 4px 0 3px; border: 1px solid #888; font: 8px/7px "DejaVu Sans", sans-serif; text-align: center; background: #fff; }
.kids { margin-left: 22px; background: linear-gradient(#999, #999) no-repeat 0 0 / 1px 68px; }
.kids .sq { margin: 0 5px 0 -4px; }
.br { width: 9px; margin-right: 1px; border-top: 1px solid #999; }

/* document windows */
.area { flex: 1; min-width: 0; display: flex; flex-direction: column; }
.mdi { flex: 1; position: relative; overflow: hidden; border-left: 2px solid #666; background: linear-gradient(#fff 3%, #dcdce0 35%, #9a9ca5); border-right: 3px solid #777; }
.win { position: absolute; display: flex; flex-direction: column; background: #d4d0c8; border: 1px solid; border-color: #f4f4f0 #555 #555 #f4f4f0; padding: 2px; }
.win.back { left: 9px; right: 9px; top: 12px; bottom: 0; border-bottom: 0; padding-bottom: 0; }
.win.front { left: 20px; right: 11px; top: 22px; bottom: 12px; }
.wtitle { display: flex; align-items: center; gap: 2px; height: 16px; flex: none; padding: 0 1px; background: linear-gradient(90deg, #0a246a, #a6caf0); color: #fff; }
.wtitle svg { width: 14px; height: 14px; }
.wtitle b { flex: 1; }
.back .wtitle { background: linear-gradient(90deg, #808080, #c0c0c0); color: #d4d0c8; }
.wb { display: flex; }
.wb button, .dtitle button { display: grid; place-items: center; width: 13px; height: 12px; background: #d4d0c8; border: 1px solid; border-color: #fff #404040 #404040 #fff; color: #000; }
.wb .cl { margin-left: 2px; }
.wb svg, .dtitle button svg { width: 8px; height: 8px; }
.client { position: relative; flex: 1; margin-top: 1px; overflow: hidden; border-left: 1px solid #444; border-top: 1px solid #444; background: linear-gradient(#2d2d2d, #666 42%, #a4a4a4); }
.model { position: absolute; left: 276px; top: 33%; width: 80px; height: 360px; }
.triad { position: absolute; left: 38px; bottom: 34px; width: 42px; height: 46px; font-size: 10px; }
.cube { position: absolute; right: 27px; top: 30px; width: 52px; height: 50px; font-size: 11px; fill: #555b62; }
.nav { position: absolute; right: 2px; top: 102px; width: 27px; display: flex; flex-direction: column; align-items: center; gap: 6px; padding: 1px 0; background: #7c7c7c; border: 1px solid #606060; border-radius: 3px; }
.nav svg { width: 14px; height: 14px; }
.nav .tiny { width: 8px; height: 8px; align-self: flex-end; margin-right: 2px; }
.nav .wheel { width: 18px; height: 18px; margin-top: 2px; }
.nav hr { width: 20px; margin: 0; border: 0; border-top: 1px solid #555; }
.nav .caret { border-width: 3px 2px 0; }
.docs { display: flex; height: 18px; flex: none; padding-left: 1px; background: linear-gradient(#aaa, #d6d6d6); border-top: 1px solid #555; line-height: 14px; }
.docs button { width: 16px; display: grid; place-items: center; background: #d0d0d0; border: 1px solid #444; }
.docs button svg { width: 13px; height: 13px; }
.docs a { display: flex; align-items: center; gap: 4px; height: 15px; padding: 0 7px 0 6px; background: #c6c6c6; border: 1px solid #666; border-top: 0; border-radius: 0 0 5px 5px; color: #111; }
.docs .on { background: #fff; }
.docs a svg { width: 7px; height: 7px; }

.status { flex: none; height: 22px; display: flex; justify-content: flex-end; gap: 2px; padding: 1px 0 2px; border-top: 1px solid #bbb; }
.status span { width: 30px; padding: 2px 5px; border: 1px solid; border-color: #888 #fff #fff #888; }

/* taskbar */
.taskbar { flex: none; height: 35px; display: flex; align-items: stretch; padding: 1px 2px; border-top: 1px solid #fff; }
.start { display: flex; align-items: center; gap: 2px; width: 43px; margin-right: 5px; font-weight: bold; color: #000; }
.start, .apps button, .btn, .hb { border: 1px solid; border-color: #fff #404040 #404040 #fff; box-shadow: inset -1px -1px #999; }
.start svg { width: 14px; height: 14px; }
.apps { width: 583px; display: grid; grid-template-columns: repeat(14, 1fr); column-gap: 2px; }
.apps button { display: grid; place-items: center; }
.apps svg { width: 27px; height: 27px; }
.apps .flat { border-color: transparent; box-shadow: none; }
.apps .stack { border-right: 3px double #555; }
.apps .night { background: linear-gradient(90deg, #0a246a 84%, #d4d0c8 84%); }
.apps .down { background: #f4f2ee; border-color: #404040 #fff #fff #404040; box-shadow: none; }
.jpg, .pro { font-size: 7px; fill: #fff; font-weight: bold; }
.lang { margin-left: auto; align-self: center; padding: 3px 5px 3px 3px; border-right: 1px solid #999; line-height: 14px; }
.tray { display: flex; align-items: center; gap: 5px; width: 131px; margin-left: 3px; padding: 0 1px 0 1px; border: 1px solid; border-color: #888 #fff #fff #888; }
.tray svg { width: 12px; height: 13px; }
.tray .round { width: 14px; height: 14px; }
.tray time { flex: 1; text-align: right; padding-right: 1px; line-height: 14px; color: #111; text-align: center; }

/* save dialog */
.dialog { position: absolute; left: 535px; right: 212px; top: 172px; bottom: 37px; display: flex; flex-direction: column; padding: 1px 2px 2px; background: #d4d0c8; border: 1px solid; border-color: #eee #404040 #404040 #eee; box-shadow: inset -1px -1px #808080; color: #111; }
.dtitle { flex: none; display: flex; align-items: center; gap: 2px; height: 16px; padding: 0 2px 0 1px; background: linear-gradient(90deg, #0a246a, #a6caf0 85%); color: #fff; }
.dtitle b { flex: 1; }
.dtitle svg { width: 14px; height: 14px; }
.dbody { flex: 1; min-height: 0; display: flex; gap: 10px; padding: 10px 13px 13px 9px; }
.places { width: 151px; padding: 0 2px; background: #808080; border: 1px solid; border-color: #555 #fff #fff #555; color: #f2f2f2; }
.places li { display: flex; align-items: center; gap: 4px; height: 13px; line-height: 13px; white-space: nowrap; }
.places svg { width: 13px; height: 13px; }
.places .sub { padding-left: 16px; }
.right { flex: 1; min-width: 0; display: flex; flex-direction: column; }
.look-in { display: flex; align-items: center; height: 19px; margin: 4px 0; gap: 5px; padding-left: 5px; }
.look-in label { width: 32px; }
.look-in .caret { margin-left: -4px; border-width: 3px 2px 0; }
.field { display: flex; align-items: center; height: 18px; flex: 0 1 516px; background: #fff; border: 1px solid; border-color: #666 #fff #fff #666; padding: 1px; }
.look-in .dir { flex: 0 0 183px; padding-left: 3px; }
.field select, .field input { flex: 1; min-width: 0; height: 14px; padding: 0 2px; outline: 0; appearance: none; }
.field select, .drop { background: #fff url("data:image/svg+xml,%3Csvg xmlns='http://www.w3.org/2000/svg' width='12' height='14'%3E%3Cpath d='M0 0h12v14H0z' fill='%23404040'/%3E%3Cpath d='M0 0h11v13H0z' fill='%23fff'/%3E%3Cpath d='M1 1h10v12H1z' fill='%23d4d0c8'/%3E%3Cpath d='M3 5h6L6 9z'/%3E%3C/svg%3E") no-repeat right center; }
.drop { width: 12px; height: 14px; }
.files { flex: 1; min-height: 0; background: linear-gradient(#fff 1px, #d4d0c8 1px 14px, #666 14px 15px, #fff 15px); margin-bottom: 7px; border-left: 1px solid #888; }
table { width: 431px; table-layout: fixed; border-collapse: collapse; }
.c1 { width: 198px; } .c2 { width: 87px; } .c3 { width: 88px; } .c4 { width: 58px; }
th, td { padding: 0; font-weight: normal; text-align: left; height: 14px; line-height: 14px; white-space: nowrap; overflow: hidden; }
th { height: 15px; }
th div { display: flex; align-items: center; gap: 5px; height: 15px; padding-left: 3px; background: #d4d0c8; border: 1px solid; border-color: #fff #555 #555 #fff; }
th button { display: grid; place-items: center; margin-left: auto; width: 10px; height: 13px; border-left: 1px solid #555; }
th .upw { border-bottom-color: #808080; }
th .dark { border-width: 3px 2px 0; }
td { padding-left: 5px; }
td:first-child { padding-left: 6px; }
td:last-child { text-align: right; padding-right: 5px; }
td svg { display: inline-block; vertical-align: top; width: 14px; height: 13px; }
.sel td { background: #0a246a; color: #fff; }
.frow { display: flex; align-items: center; height: 18px; margin-bottom: 7px; }
.frow label { width: 62px; padding-left: 1px; flex: none; }
.frow { padding-left: 2px; }
.frow:last-child { margin-bottom: 5px; }
.dfoot { flex: none; display: flex; align-items: center; gap: 5px; height: 42px; margin: 0 7px 0 9px; padding-bottom: 13px; padding-top: 8px; border-top: 1px solid #888; box-shadow: inset 0 1px #fff; }
.hb { display: grid; place-items: center; width: 19px; height: 20px; margin-right: auto; }
.hb svg { width: 13px; height: 13px; }
.btn { width: 82px; height: 20px; }
.def { margin-left: 23px; border-color: #111; box-shadow: inset 1px 1px #fff, inset -1px -1px #777; }
.size { position: absolute; right: 2px; bottom: 2px; width: 10px; height: 10px; }
```
